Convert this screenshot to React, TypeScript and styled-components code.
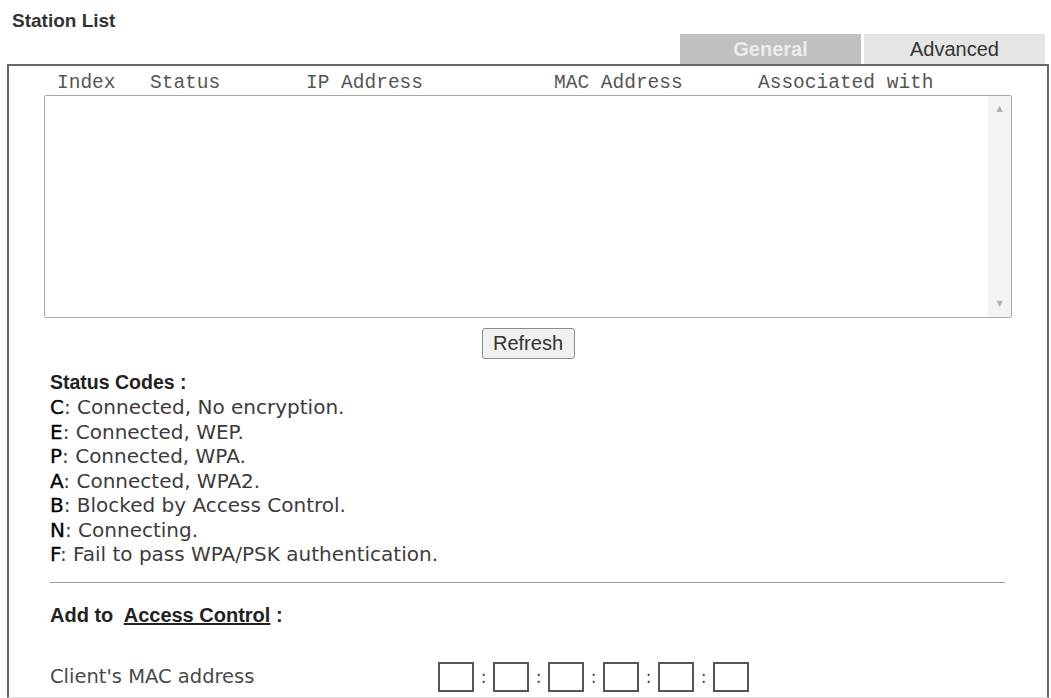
import React from 'react';
import styled, { createGlobalStyle } from 'styled-components';

const COLUMNS = [
  { label: 'Index', width: 93 },
  { label: 'Status', width: 156 },
  { label: 'IP Address', width: 248 },
  { label: 'MAC Address', width: 204 },
  { label: 'Associated with', width: 220 },
];

const CODES = [
  ['C', 'Connected, No encryption.'],
  ['E', 'Connected, WEP.'],
  ['P', 'Connected, WPA.'],
  ['A', 'Connected, WPA2.'],
  ['B', 'Blocked by Access Control.'],
  ['N', 'Connecting.'],
  ['F', 'Fail to pass WPA/PSK authentication.'],
];

export default function App() {
  return (
    <>
      <GlobalStyle />
      <Page>
        <Title>Station List</Title>
        <TabRow>
          <Tab active>General</Tab>
          <Tab>Advanced</Tab>
        </TabRow>
        <Panel>
          <HeaderRow>
            {COLUMNS.map((col) => (
              <HeaderCell key={col.label} width={col.width}>
                {col.label}
              </HeaderCell>
            ))}
          </HeaderRow>
          <ListBox>
            <ScrollTrack>
              <Arrow>▲</Arrow>
              <Arrow>▼</Arrow>
            </ScrollTrack>
          </ListBox>
          <ButtonRow>
            <RefreshButton>Refresh</RefreshButton>
          </ButtonRow>
          <Codes>
            <CodesTitle>Status Codes :</CodesTitle>
            {CODES.map(([letter, text]) => (
              <CodeLine key={letter}>
                <Letter>{letter}</Letter>: {text}
              </CodeLine>
            ))}
          </Codes>
          <Divider />
          <AddTitle>
            Add to&nbsp; <u>Access Control</u> :
          </AddTitle>
          <MacRow>
            <MacLabel>Client's MAC address</MacLabel>
            <MacFields>
              {[0, 1, 2, 3, 4, 5].map((i) => (
                <React.Fragment key={i}>
                  {i > 0 && <Colon>:</Colon>}
                  <MacBox />
                </React.Fragment>
              ))}
            </MacFields>
          </MacRow>
        </Panel>
      </Page>
    </>
  );
}

const GlobalStyle = createGlobalStyle`
  html, body {
    margin: 0;
    padding: 0;
    background: #fff;
    overflow: hidden;
  }
  body {
    font-family: "DejaVu Sans", Verdana, sans-serif;
    color: #333;
  }
`;

const Page = styled.div`
  width: 1051px;
  height: 698px;
  overflow: hidden;
`;

const Title = styled.div`
  font-family: 'Liberation Sans', Arial, sans-serif;
  font-weight: 700;
  font-size: 19px;
  line-height: 22px;
  color: #333;
  padding: 10px 0 0 12px;
  height: 24px;
`;

const TabRow = styled.div`
  display: flex;
  justify-content: flex-end;
  gap: 3px;
  padding-right: 6px;
`;

const Tab = styled.div<{ active?: boolean }>`
  width: 181px;
  height: 30px;
  display: flex;
  align-items: center;
  justify-content: center;
  font-family: 'Liberation Sans', Arial, sans-serif;
  font-size: 20px;
  font-weight: ${(p) => (p.active ? 700 : 400)};
  color: ${(p) => (p.active ? '#ececec' : '#333')};
  background: ${(p) => (p.active ? '#c0c0c0' : '#e5e5e5')};
`;

const Panel = styled.div`
  margin-left: 7px;
  width: 1038px;
  height: 631px;
  border: 2px solid #666;
  border-bottom: 1px solid #ddd;
  box-sizing: content-box;
`;

const HeaderRow = styled.div`
  display: flex;
  padding: 6px 0 0 48px;
  height: 23px;
`;

const HeaderCell = styled.div<{ width: number }>`
  width: ${(p) => p.width}px;
  font-family: 'Liberation Mono', 'Courier New', monospace;
  font-size: 19.5px;
  line-height: 22px;
  color: #555;
`;

const ListBox = styled.div`
  margin-left: 35px;
  width: 968px;
  height: 223px;
  box-sizing: border-box;
  border: 1px solid #a9a9a9;
  border-radius: 2px;
  background: #fff;
  display: flex;
  justify-content: flex-end;
`;

const ScrollTrack = styled.div`
  width: 23px;
  background: #f3f3f3;
  display: flex;
  flex-direction: column;
  justify-content: space-between;
  align-items: center;
  padding: 8px 0;
`;

const Arrow = styled.span`
  font-size: 8px;
  color: #b0b0b0;
  line-height: 10px;
`;

const ButtonRow = styled.div`
  display: flex;
  justify-content: center;
  padding-top: 10px;
`;

const RefreshButton = styled.button`
  font-family: 'Liberation Sans', Arial, sans-serif;
  font-size: 20px;
  color: #333;
  background: #f0f0f0;
  border: 1px solid #8c8c8c;
  border-radius: 3px;
  width: 93px;
  height: 31px;
  padding: 0;
`;

const Codes = styled.div`
  padding: 11px 0 0 41px;
  font-size: 20px;
  line-height: 24.5px;
`;

const CodesTitle = styled.div`
  font-family: 'Liberation Sans', Arial, sans-serif;
  font-weight: 700;
  font-size: 19.5px;
  line-height: 25px;
  color: #222;
`;

const CodeLine = styled.div`
  color: #3c3c3c;
  white-space: nowrap;
`;

const Letter = styled.span`
  color: #000;
  -webkit-text-stroke: 0.3px #000;
`;

const Divider = styled.div`
  margin: 15px 0 0 41px;
  width: 955px;
  border-top: 1px solid #999;
`;

const AddTitle = styled.div`
  padding: 20px 0 0 41px;
  font-family: 'Liberation Sans', Arial, sans-serif;
  font-weight: 700;
  font-size: 20px;
  line-height: 24px;
  color: #222;
`;

const MacRow = styled.div`
  display: flex;
  align-items: center;
  padding: 35px 0 0 41px;
`;

const MacLabel = styled.div`
  width: 388px;
  font-size: 19.5px;
  line-height: 24px;
  color: #4a4a4a;
`;

const MacFields = styled.div`
  display: flex;
  align-items: center;
`;

const MacBox = styled.div`
  width: 32px;
  height: 26px;
  border: 2px solid #555;
  box-sizing: content-box;
`;

const Colon = styled.span`
  width: 19px;
  text-align: center;
  font-size: 17px;
  color: #444;
`;
